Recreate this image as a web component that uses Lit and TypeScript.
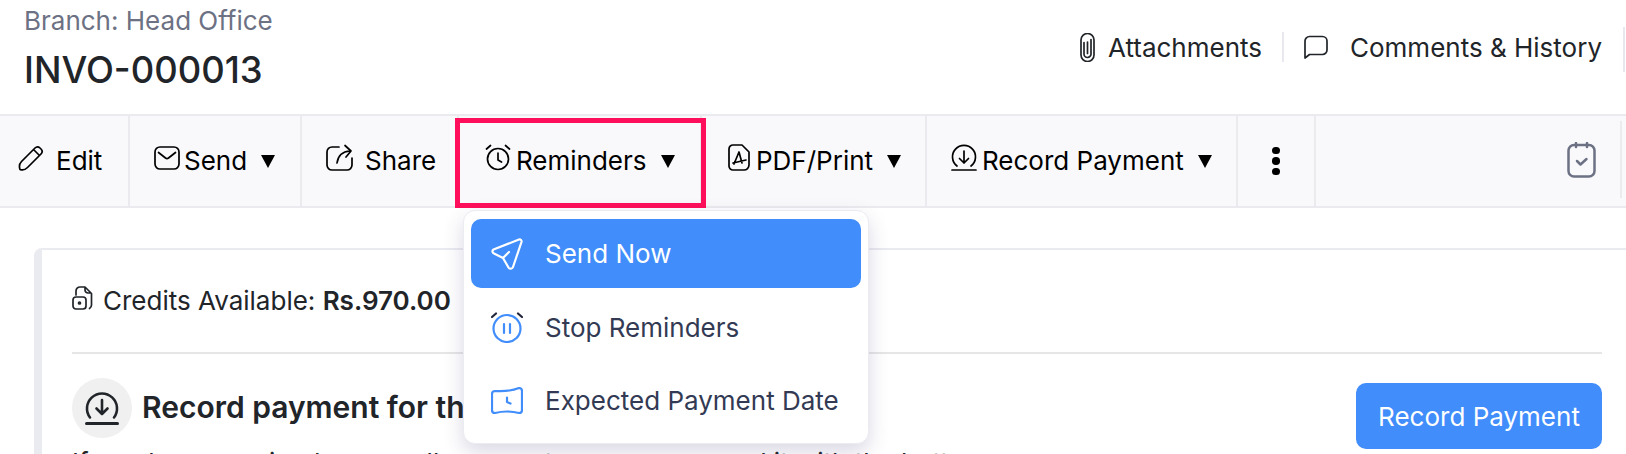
import { LitElement, html, css, svg } from "lit";
import { customElement } from "lit/decorators.js";

const s = (w: number, h: number, body: any, sw = 1.7) => html`<svg class="ic" width=${w} height=${h} viewBox="0 0 ${w} ${h}" fill="none" stroke="currentColor" stroke-width=${sw} stroke-linecap="round" stroke-linejoin="round">${body}</svg>`;

@customElement("app-root")
export class AppRoot extends LitElement {
  static styles = css`
    :host { display: block; width: 1626px; height: 454px; overflow: hidden; position: relative; background: #fff; font-family: Inter, "Liberation Sans", sans-serif; color: #000; }
    .ic { flex: none; display: block; }
    .head { height: 114px; box-sizing: border-box; padding: 6px 0 0 24px; display: flex; justify-content: space-between; }
    .branch { font-size: 26px; line-height: 30px; color: #6c7184; }
    .title { font-size: 36.4px; font-weight: 500; line-height: 44px; margin-top: 12px; color: #212529; }
    .links { display: flex; align-items: center; height: 82px; font-size: 26px; color: #212529; }
    .link { display: flex; align-items: center; }
    .gap14 { margin-left: 13px; }
    .gap22 { margin-left: 22px; }
    .vr { width: 2px; height: 30px; background: #e8e8ee; margin: 0 20px 0 20px; }
    .vr2 { width: 2px; height: 45px; background: #e8e8ee; margin: 5px 1px 0 21px; }
    .bar { height: 94px; box-sizing: border-box; display: flex; background: #f9f9fb; border-top: 2px solid #ebebef; border-bottom: 2px solid #ebebef; font-size: 26px; }
    .btn { display: flex; align-items: center; box-sizing: border-box; border-right: 2px solid #ebebef; height: 100%; padding-bottom: 1px; }
    .btn .ic { margin-top: -6px; }
    .b-edit { width: 130px; padding-left: 18px; }
    .b-send { width: 172px; padding-left: 24px; }
    .b-share { width: 157px; padding-left: 24px; }
    .b-rem { width: 243px; padding-left: 26px; }
    .b-pdf { width: 225px; padding-left: 26px; }
    .b-rec { width: 311px; padding-left: 24px; }
    .b-more { width: 78px; padding-left: 34px; padding-bottom: 0; }
    .g12 { margin-left: 12px; }
    .g11 { margin-left: 11px; }
    .g5 { margin-left: 5px; }
    .g4 { margin-left: 4px; }
    .g6 { margin-left: 6px; }
    .redbox { position: absolute; left: 455px; top: 118px; width: 251px; height: 90px; box-sizing: border-box; border: 5px solid #ff0f5b; }
    .caret { flex: none; width: 0; height: 0; margin: 1px 0 0 14px; border-left: 7.5px solid transparent; border-right: 7.5px solid transparent; border-top: 13px solid #000; }
    .dots { display: flex; flex-direction: column; gap: 3px; }
    .dots i { width: 7.5px; height: 7.5px; border-radius: 50%; background: #000; }
    .spacer { flex: 1; }
    .cal { color: #6c7184; display: flex; align-items: center; padding-bottom: 2px; }
    .vsep { width: 2px; height: 77px; align-self: flex-start; margin: 5px 4px 0 24px; background: #ebebef; }
    .card { margin: 40px 0 0 34px; border-left: 8px solid #eaeaf1; border-top: 2px solid #eaeaf1; border-radius: 8px 0 0 0; padding: 0 24px 0 30px; }
    .credits { display: flex; align-items: center; box-sizing: border-box; height: 102px; padding-bottom: 2px; font-size: 26px; color: #212529; }
    .credits .ic { margin-top: -4px; }
    .credits b { font-weight: 600; }
    .hr { height: 2px; background: #e6e6e6; }
    .rec { display: flex; align-items: flex-start; justify-content: space-between; margin-top: 24px; height: 60px; }
    .recl { display: flex; align-items: center; gap: 10px; font-size: 30px; font-weight: 600; color: #212529; }
    .recl > span:last-child { margin-top: -2px; }
    .round { width: 60px; height: 60px; border-radius: 50%; background: #f0f0f0; display: flex; align-items: center; justify-content: center; }
    .pbtn { width: 246px; height: 66px; background: #408dfb; color: #fff; border-radius: 10px; display: flex; align-items: center; justify-content: center; font-size: 26px; margin-top: 5px; }
    .para { font-size: 26px; line-height: 32px; color: #212529; margin-top: 9px; white-space: nowrap; }
    .menu { position: absolute; left: 463px; top: 210px; width: 406px; height: 234px; box-sizing: border-box; background: #fff; border: 1px solid #ebebf2; border-radius: 12px; box-shadow: 0 8px 20px rgba(70,60,120,.2); padding: 8px 7px; font-size: 26px; color: #333a54; }
    .mi { display: flex; align-items: center; height: 69px; border-radius: 10px; padding-left: 20px; gap: 22px; margin-bottom: 4.5px; }
    .mi.on { background: #408dfb; color: #fff; }
    .mi .ic { color: #408dfb; }
    .mi.on .ic { color: #fff; }
  `;

  render() {
    return html`
      <div class="head">
        <div>
          <div class="branch">Branch: Head Office</div>
          <div class="title">INVO-000013</div>
        </div>
        <div class="links">
          <div class="link">${s(15, 29, svg`<path d="M7.500 9v11.500M4 9.500V21a3.500 3.500 0 0 0 7 0V6.500M1 7v15a6.500 6.500 0 0 0 13 0V7a6.500 6.500 0 0 0-13 0"/>`)}<span class="gap14">Attachments</span></div>
          <div class="vr"></div>
          <div class="link">${s(24, 24, svg`<path d="M1 23V6a4.500 4.500 0 0 1 4.500-4.500h13A4.500 4.500 0 0 1 23 6v9a4.500 4.500 0 0 1-4.500 4.500H5.500z"/>`)}<span class="gap22">Comments &amp; History</span></div>
          <div class="vr2"></div>
        </div>
      </div>
      <div class="bar">
        <div class="btn b-edit">${s(27, 27, svg`<path d="M2 25.500c-1-3-.5-6 1.500-8L17 4a3.600 3.600 0 0 1 5 0l1 1a3.600 3.600 0 0 1 0 5L9.500 23.500c-2 2-5 3-7.500 2zM15.500 5.500l6 6"/>`)}<span class="g11">Edit</span></div>
        <div class="btn b-send">${s(26, 24, svg`<rect x="1" y="1" width="24" height="22" rx="5"/><path d="M4.500 6.500l7 5.500a2.500 2.500 0 0 0 3 0l7-5.500"/>`)}<span class="g4">Send</span><span class="caret"></span></div>
        <div class="btn b-share">${s(27, 27, svg`<path d="M13 3H6a5 5 0 0 0-5 5v13a5 5 0 0 0 5 5h15a5 5 0 0 0 5-5v-7M11 19c1-7 5-11.500 13-12M19 1.500l6 5.500-5 6"/>`)}<span class="g12">Share</span></div>
        <div class="btn b-rem">${s(26, 27, svg`<circle cx="13" cy="15" r="10.500"/><path d="M13 9v7l3.500 2M1.500 5l4-3.500M24.500 5l-4-3.500"/>`)}<span class="g5">Reminders</span><span class="caret"></span></div>
        <div class="btn b-pdf">${s(22, 27, svg`<path d="M5 1h9l7 7v13a5 5 0 0 1-5 5H5a4 4 0 0 1-4-4V5a4 4 0 0 1 4-4zM11 8l3 11M11 8l-5 12M5 19l13-3"/>`)}<span class="g6">PDF/Print</span><span class="caret"></span></div>
        <div class="btn b-rec">${s(26, 27, svg`<path d="M6 22a11.500 11.500 0 1 1 14 0M13 7v12M8.500 14.500l4.500 4.500 4.500-4.500M1 26h24"/>`)}<span class="g5">Record Payment</span><span class="caret"></span></div>
        <div class="btn b-more"><div class="dots"><i></i><i></i><i></i></div></div>
        <div class="spacer"></div>
        <div class="cal">${s(29, 36, svg`<rect x="1.500" y="3" width="26" height="31.500" rx="5.500"/><path d="M9 1v4M20 1v4"/><path d="M10 19l3.500 3.500L19.500 17" stroke-width="2.500"/>`, 2.5)}</div>
        <div class="vsep"></div>
      </div>
      <div class="card">
        <div class="credits">${s(21, 24, svg`<path d="M4 9V5a4 4 0 0 1 4-4h5l6.500 6.500V19a4 4 0 0 1-2 3.500M13 1v3a3 3 0 0 0 3 3h3"/><rect x="1" y="11" width="13" height="12" rx="3"/><circle cx="7.500" cy="17" r="1"/>`)}<span style="margin-left:10px">Credits Available: <b>Rs.970.00</b></span></div>
        <div class="hr"></div>
        <div class="rec">
          <div class="recl"><span class="round">${s(34, 34, svg`<path d="M5 26.500a15 15 0 1 1 24 0M17 9v14M11.500 17.500L17 23l5.500-5.500"/><path d="M1.500 32.500h31" stroke-width="3"/>`, 2.6)}</span><span>Record payment for this invoice</span></div>
          <div class="pbtn">Record Payment</div>
        </div>
        <div class="para">If you have received any or all payments, you can record it with the button.</div>
      </div>
      <div class="redbox"></div>
      <div class="menu">
        <div class="mi on">${s(32, 32, svg`<path d="M2.500 11.500L28 1.500a2 2 0 0 1 2.500 2.500L22 29a2.500 2.500 0 0 1-4.500.500L12 20 3 15.500a2.200 2.200 0 0 1-.5-4zM12 20l6-6"/>`, 2.2)}<span>Send Now</span></div>
        <div class="mi">${s(32, 32, svg`<circle cx="16" cy="17.500" r="13.500"/><path d="M13 13v9M19 13v9"/><path d="M1 6l4-3.500M31 6l-4-3.500" stroke="#21263c"/>`, 2.2)}<span>Stop Reminders</span></div>
        <div class="mi">${s(32, 28, svg`<path d="M1 7a3 3 0 0 1 3-3c9 .5 16 .5 24-3a3 3 0 0 1 3 3v19a3 3 0 0 1-3 3c-8-2-16-2-24 0a3 3 0 0 1-3-3z"/><path d="M16 10.500V15l3.500 1.500"/>`, 2.2)}<span>Expected Payment Date</span></div>
      </div>
    `;
  }
}
